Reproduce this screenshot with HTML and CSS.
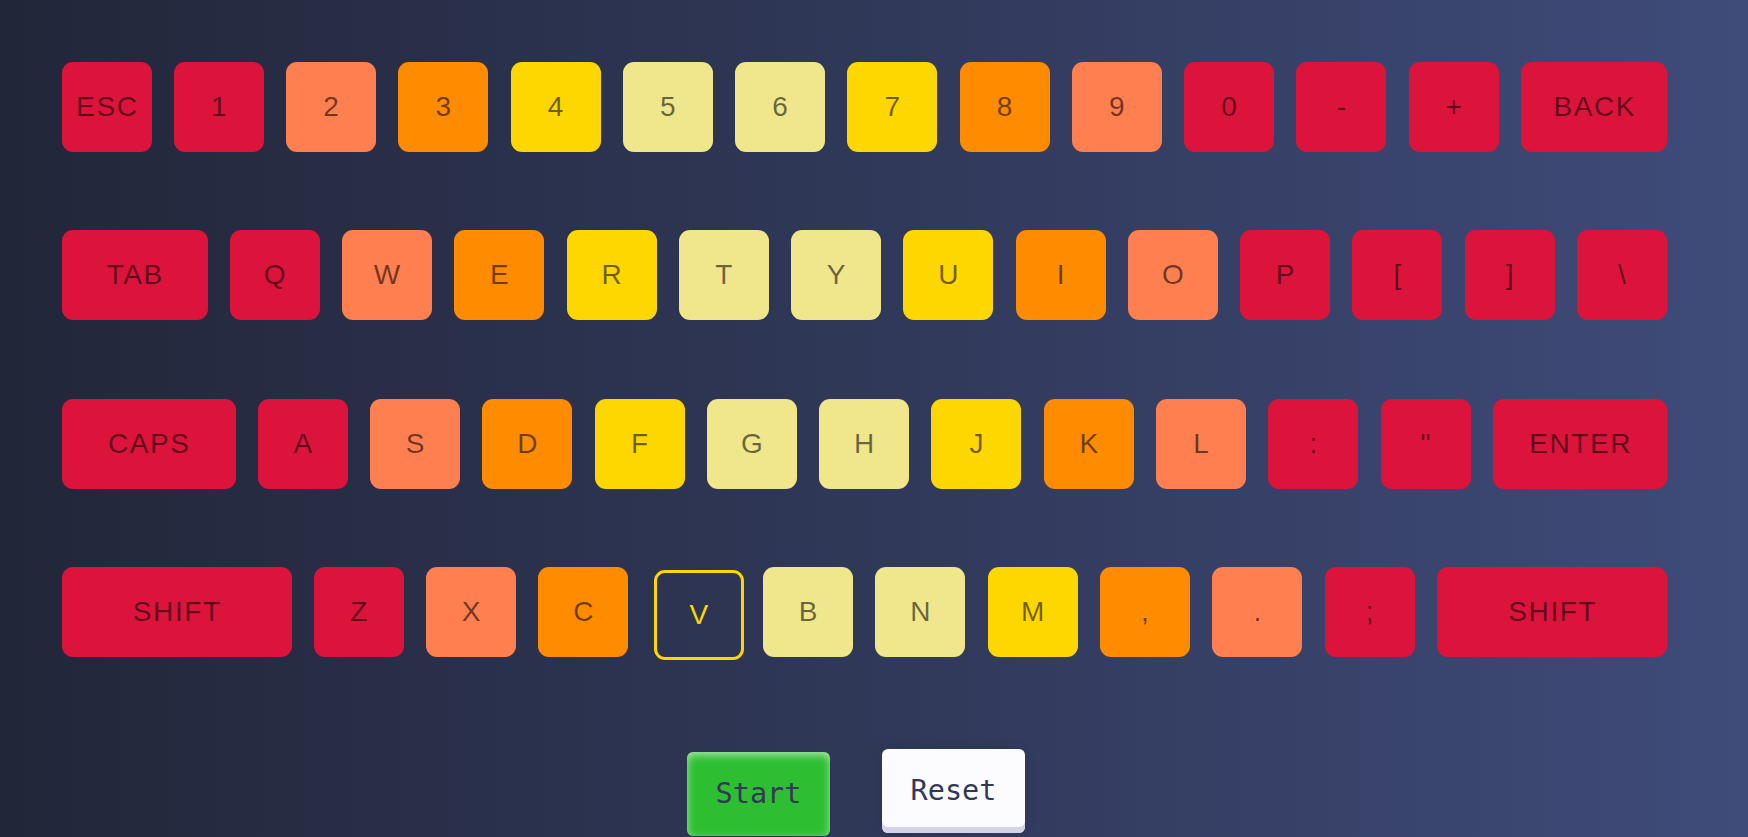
FILE: index.html
```html
<!DOCTYPE html>
<html lang="en">
<head>
<meta charset="utf-8">
<title>Keyboard</title>
<link rel="stylesheet" href="styles.css">
</head>
<body class="page">
<main class="app">
  <div class="keyboard">
    <div class="row">
      <div class="key red">ESC</div>
      <div class="key red">1</div>
      <div class="key coral">2</div>
      <div class="key orange">3</div>
      <div class="key gold">4</div>
      <div class="key khaki">5</div>
      <div class="key khaki">6</div>
      <div class="key gold">7</div>
      <div class="key orange">8</div>
      <div class="key coral">9</div>
      <div class="key red">0</div>
      <div class="key red">-</div>
      <div class="key red">+</div>
      <div class="key red w-back">BACK</div>
    </div>
    <div class="row">
      <div class="key red w-back">TAB</div>
      <div class="key red">Q</div>
      <div class="key coral">W</div>
      <div class="key orange">E</div>
      <div class="key gold">R</div>
      <div class="key khaki">T</div>
      <div class="key khaki">Y</div>
      <div class="key gold">U</div>
      <div class="key orange">I</div>
      <div class="key coral">O</div>
      <div class="key red">P</div>
      <div class="key red">[</div>
      <div class="key red">]</div>
      <div class="key red">\</div>
    </div>
    <div class="row">
      <div class="key red w-caps">CAPS</div>
      <div class="key red">A</div>
      <div class="key coral">S</div>
      <div class="key orange">D</div>
      <div class="key gold">F</div>
      <div class="key khaki">G</div>
      <div class="key khaki">H</div>
      <div class="key gold">J</div>
      <div class="key orange">K</div>
      <div class="key coral">L</div>
      <div class="key red">:</div>
      <div class="key red">"</div>
      <div class="key red w-caps">ENTER</div>
    </div>
    <div class="row">
      <div class="key red w-shift">SHIFT</div>
      <div class="key red">Z</div>
      <div class="key coral">X</div>
      <div class="key orange">C</div>
      <div class="key target">V</div>
      <div class="key khaki">B</div>
      <div class="key khaki">N</div>
      <div class="key gold">M</div>
      <div class="key orange">,</div>
      <div class="key coral">.</div>
      <div class="key red">;</div>
      <div class="key red w-shift">SHIFT</div>
    </div>
  </div>
  <div class="controls">
    <button class="btn btn-start">Start</button>
    <button class="btn btn-reset">Reset</button>
  </div>
</main>
</body>
</html>
```

FILE: styles.css
```css
* { box-sizing: border-box; }

.page {
  margin: 0;
  height: 837px;
  overflow: hidden;
  background: linear-gradient(90deg, #222639 0%, #3f4b79 100%);
  font-family: "Liberation Sans", Arial, sans-serif;
}

.app {
  padding: 62px 0 0 61.5px;
}

.keyboard {
  width: 1605.5px;
  display: flex;
  flex-direction: column;
  gap: 78.3px;
}

.row {
  display: flex;
  justify-content: space-between;
}

.key {
  width: 90px;
  height: 90px;
  flex: none;
  border-radius: 11px;
  display: flex;
  align-items: center;
  justify-content: center;
  font-size: 28px;
  letter-spacing: 1.6px;
  text-indent: 1.6px;
  color: rgba(0, 0, 0, 0.56);
}

.w-back { width: 146px; }
.w-caps { width: 174px; }
.w-shift { width: 230px; }

.red { background: #dc143c; }
.coral { background: #ff7f50; }
.orange { background: #ff8c00; }
.gold { background: #ffd700; }
.khaki { background: #f0e68c; }

.target {
  background: transparent;
  border: 3px solid #ffd700;
  color: #ffd700;
  transform: translate(3px, 3px);
}

.controls {
  display: flex;
  gap: 52px;
  margin-top: 92px;
  padding-left: 625.5px;
}

.btn {
  width: 143px;
  height: 84px;
  padding: 0;
  border: none;
  border-radius: 6px;
  font-family: "DejaVu Sans Mono", monospace;
  font-size: 28.5px;
  color: #33385a;
}

.btn-start {
  background: #2dbf31;
  transform: translateY(3px);
  box-shadow: inset 0 3px 9px rgba(255, 255, 255, 0.6);
}

.btn-reset {
  background: #fcfcfe;
  box-shadow: inset 0 -6px 0 #d5d3e8, 0 0 14px rgba(0, 0, 0, 0.12);
}
```
